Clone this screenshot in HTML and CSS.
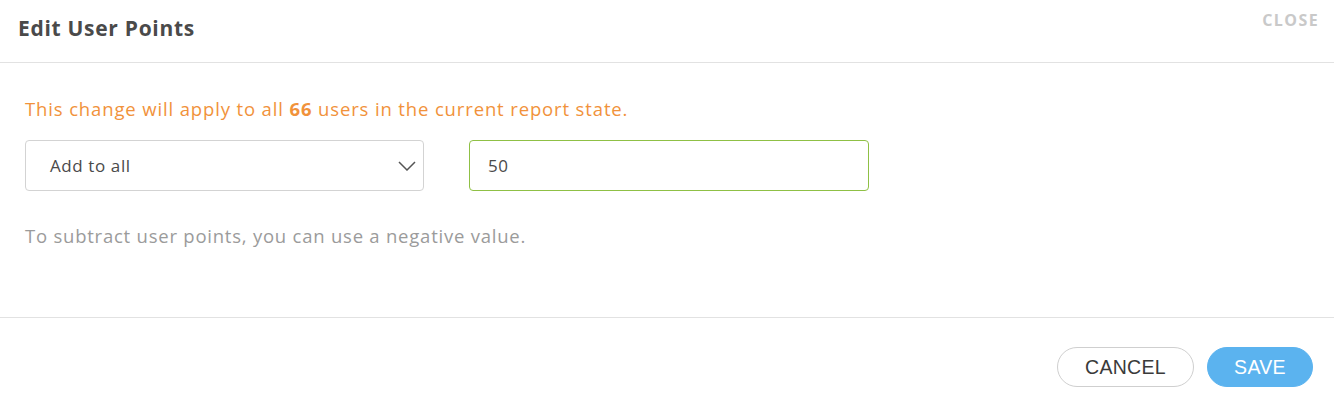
FILE: index.html
```html
<!DOCTYPE html>
<html>
<head>
<meta charset="utf-8">
<link rel="stylesheet" href="styles.css">
</head>
<body>
<div class="modal">
  <div class="header">
    <h1 class="title">Edit User Points</h1>
    <span class="close">CLOSE</span>
  </div>
  <div class="content">
    <p class="notice">This change will apply to all <b>66</b> users in the current report state.</p>
    <div class="fields">
      <div class="select">
        <span>Add to all</span>
        <svg class="chev" width="18" height="10" viewBox="0 0 18 10"><path d="M1 1 L9 9 L17 1" fill="none" stroke="#555" stroke-width="1.5"/></svg>
      </div>
      <div class="input"><span>50</span></div>
    </div>
    <p class="hint">To subtract user points, you can use a negative value.</p>
  </div>
  <div class="footer">
    <button class="btn cancel">CANCEL</button>
    <button class="btn save">SAVE</button>
  </div>
</div>
</body>
</html>
```
FILE: styles.css
```css
html, body { margin: 0; padding: 0; background: #fff; }
body { font-family: "Open Sans", Lato, sans-serif; }
.modal { width: 1334px; height: 410px; display: flex; flex-direction: column; }
.header {
  height: 63px; border-bottom: 1px solid #e2e2e2; box-sizing: border-box;
  display: flex; justify-content: space-between; align-items: flex-start;
  padding: 0 15px 0 18px;
}
.title { margin: 14px 0 0; font-size: 21px; font-weight: 700; color: #4a4a4a; line-height: 28px; letter-spacing: 0.7px; }
.close { margin-top: 9px; font-size: 16px; font-weight: 700; color: #c9c9c9; letter-spacing: 1.4px; line-height: 22px; }
.content { height: 255px; box-sizing: border-box; border-bottom: 1px solid #e2e2e2; padding: 33px 25px 0; }
.notice { margin: 0; font-size: 18.5px; color: #f1923b; line-height: 26px; letter-spacing: 0.86px; }
.notice b { font-weight: 700; }
.fields { display: flex; gap: 45px; margin-top: 18px; }
.select, .input {
  width: 400px; height: 51px; box-sizing: border-box; border-radius: 4px;
  display: flex; align-items: center; justify-content: space-between;
  font-size: 17px; color: #4a4a4a; letter-spacing: 0.6px;
}
.select { width: 399px; border: 1px solid #d3d3d3; padding: 0 7px 0 24px; }
.input { border: 1px solid #8fc045; padding: 0 18px; }
.hint { margin: 33px 0 0; font-size: 18.5px; color: #9b9b9b; line-height: 24px; letter-spacing: 0.77px; }
.footer { flex: 1; display: flex; justify-content: flex-end; align-items: flex-start; gap: 13px; padding: 29px 21px 0 0; }
.btn {
  height: 40px; border-radius: 20px; font-family: "Liberation Sans", sans-serif; font-size: 19.5px;
  letter-spacing: 0.3px; cursor: pointer;
}
.cancel { width: 137px; background: #fff; border: 1px solid #cfcfcf; color: #3a3a3a; }
.save { width: 106px; background: #5bb3ef; border: 1px solid #5bb3ef; color: #fff; }
```
